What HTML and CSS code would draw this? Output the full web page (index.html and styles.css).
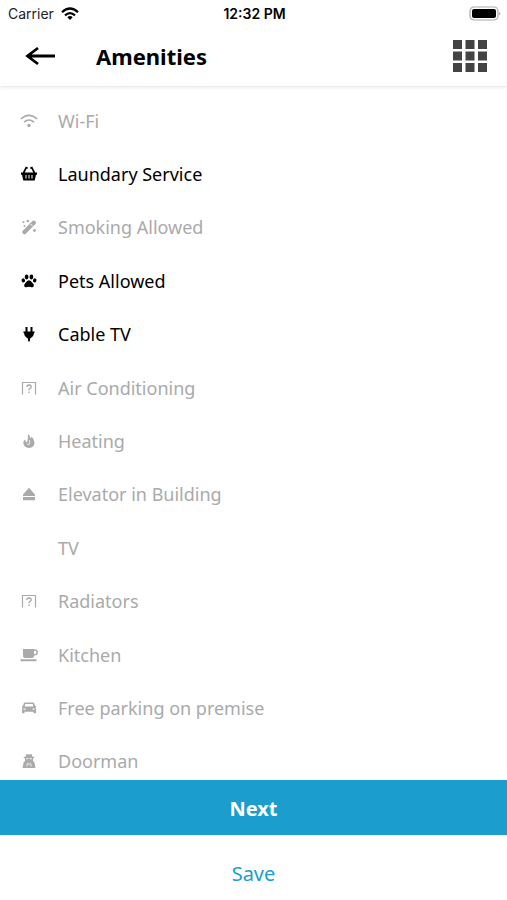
FILE: index.html
```html
<!DOCTYPE html>
<html lang="en">
<head>
    <meta charset="UTF-8">
    <meta name="viewport" content="width=device-width, initial-scale=1">
    <title>Amenities</title>
    <link rel="stylesheet" href="styles.css">
</head>
<body>
    <header class="header">
        <div class="status">
            <div class="carrier">
                <span>Carrier</span>
                <svg width="18" height="14" viewBox="0 0 18 14" fill="none" stroke="#000" stroke-width="2.2">
                    <path d="M1 5.2Q9-2.2 17 5.2M4 8.4Q9 3.8 14 8.4"/>
                    <path d="M9 13L6.3 10.2Q9 8 11.7 10.2Z" fill="#000" stroke="none"/>
                </svg>
            </div>
            <time class="clock">12:32 PM</time>
            <svg class="battery" width="32" height="16" viewBox="0 0 32 16">
                <rect x="1" y="1" width="28" height="13" rx="4" fill="#fff" stroke="#aaa" stroke-width="1.2"/>
                <rect x="3" y="3" width="24" height="9" rx="2" fill="#000"/>
                <path d="M30.3 5.5Q32 7.5 30.3 9.5Z" fill="#888"/>
            </svg>
        </div>
        <div class="navbar">
            <button class="icon-button" type="button" aria-label="Back">
                <svg width="30" height="20" viewBox="0 0 30 20" fill="none" stroke="#000" stroke-width="2.8">
                    <path d="M2 10H30M13 2L2.500 10L13 18"/>
                </svg>
            </button>
            <h1 class="title">Amenities</h1>
            <button class="icon-button" type="button" aria-label="Menu">
                <svg width="34" height="32" viewBox="0 0 34 32" fill="#434343">
                    <path d="M0 0h9v9H0zM12.500 0h9v9h-9zM25 0h9v9h-9zM0 11.500h9v9H0zM12.500 11.500h9v9h-9zM25 11.500h9v9h-9zM0 23h9v9H0zM12.500 23h9v9h-9zM25 23h9v9h-9z"/>
                </svg>
            </button>
        </div>
    </header>

    <main class="amenities">
        <button class="amenity" type="button" aria-pressed="false">
            <svg class="icon" viewBox="0 0 18 18" fill="none" stroke="currentColor" stroke-width="1.6">
                <path class="line" d="M.8 7Q9-.2 17.200 7M4 10.200Q9 5.800 14 10.200"/>
                <circle cx="9" cy="13.500" r="1.700" fill="currentColor" stroke="none"/>
            </svg>
            <span>Wi-Fi</span>
        </button>
        <button class="amenity" type="button" aria-pressed="true">
            <svg class="icon" viewBox="0 0 18 18">
                <path d="M1 7.500H17V9.700H16L14.700 15.500H3.300L2 9.700H1Z"/>
                <path d="M3.500 8L6.200 2.700L7.700 3.300M14.500 8L11.800 2.700L10.300 3.300" fill="none" stroke="currentColor" stroke-width="1.700"/>
                <path d="M6 10v3.500M9 10v3.500M12 10v3.500" stroke="#fff"/>
            </svg>
            <span>Laundary Service</span>
        </button>
        <button class="amenity" type="button" aria-pressed="false">
            <svg class="icon" viewBox="0 0 18 18">
                <path d="M2.500 13L12.500 3Q13.800 2 15 3L15.700 3.700Q16.500 4.800 15.500 6L5.500 16Q4.300 16.700 3.300 16L2.600 15.300Q1.800 14 2.500 13Z"/>
                <path d="M10.500 6L12.500 8" stroke="#fff"/>
                <circle cx="3.500" cy="4" r="1.100"/>
                <circle cx="7.800" cy="3" r="1.300"/>
                <circle cx="4.500" cy="8" r="1"/>
                <circle cx="14.500" cy="12.500" r="1.400"/>
            </svg>
            <span>Smoking Allowed</span>
        </button>
        <button class="amenity" type="button" aria-pressed="true">
            <svg class="icon" viewBox="0 0 18 18">
                <ellipse cx="6.600" cy="5" rx="1.900" ry="2.400"/>
                <ellipse cx="11.400" cy="5" rx="1.900" ry="2.400"/>
                <ellipse cx="3.300" cy="8.400" rx="1.700" ry="2.100" transform="rotate(-20 3.300 8.400)"/>
                <ellipse cx="14.700" cy="8.400" rx="1.700" ry="2.100" transform="rotate(20 14.700 8.400)"/>
                <path d="M9 8.300Q11 8.300 12.300 10.800Q14.200 12.300 13.800 14Q13 15.800 10.800 14.900Q9 14.500 7.200 14.900Q5 15.800 4.200 14Q3.800 12.300 5.700 10.800Q7 8.300 9 8.300Z"/>
            </svg>
            <span>Pets Allowed</span>
        </button>
        <button class="amenity" type="button" aria-pressed="true">
            <svg class="icon" viewBox="0 0 18 18">
                <path d="M5.500 2h2v4.500h3V2h2v4.500H14.500V8H13.900Q13.900 11.500 10.300 13.300L9.700 16.500h-1.400L7.700 13.300Q4.100 11.500 4.100 8H3.500V6.500H5.500Z"/>
            </svg>
            <span>Cable TV</span>
        </button>
        <button class="amenity" type="button" aria-pressed="false">
            <svg class="icon" viewBox="0 0 18 18">
                <path d="M2.500 15.500V3.500H15.500V15.500" fill="none" stroke="currentColor" stroke-width="1.200"/>
                <path d="M6.800 7.800Q7 6 9.200 6Q11.300 6.100 11.200 7.800Q11 8.800 10 9.500Q9 10.300 9 11.300M9 12.500v1.500" fill="none" stroke="currentColor" stroke-width="1.400"/>
            </svg>
            <span>Air Conditioning</span>
        </button>
        <button class="amenity" type="button" aria-pressed="false">
            <svg class="icon" viewBox="0 0 18 18">
                <path d="M8 2Q10.500 3.500 10.300 6.500Q11.600 6 11.500 4.500Q14.500 7.300 14.500 10.500Q14.300 15.700 9 16Q3.700 15.700 3.300 10.800Q3.300 8.500 5.300 7.500Q5 10 7 10.300Q8 8.300 8 2Z"/>
                <path d="M9.500 8Q10.500 10 9 12.500Q7.500 13 7 11.500" fill="none" stroke="#fff" stroke-width=".8"/>
            </svg>
            <span>Heating</span>
        </button>
        <button class="amenity" type="button" aria-pressed="false">
            <svg class="icon" viewBox="0 0 18 18">
                <path d="M9 2.800L15 9.500V11H3V9.500ZM3 12H15V15.200H3Z"/>
            </svg>
            <span>Elevator in Building</span>
        </button>
        <button class="amenity" type="button" aria-pressed="false">
            <svg class="icon" viewBox="0 0 18 18"></svg>
            <span>TV</span>
        </button>
        <button class="amenity" type="button" aria-pressed="false">
            <svg class="icon" viewBox="0 0 18 18">
                <path d="M2.500 15.500V3.500H15.500V15.500" fill="none" stroke="currentColor" stroke-width="1.200"/>
                <path d="M6.800 7.800Q7 6 9.200 6Q11.300 6.100 11.200 7.800Q11 8.800 10 9.500Q9 10.300 9 11.300M9 12.500v1.500" fill="none" stroke="currentColor" stroke-width="1.400"/>
            </svg>
            <span>Radiators</span>
        </button>
        <button class="amenity" type="button" aria-pressed="false">
            <svg class="icon" viewBox="0 0 18 18">
                <path d="M3 3H14V10Q14 12 12 12H5Q3 12 3 10ZM.5 13.200H16.500V15.200H.5Z"/>
                <path d="M14 4H15Q17.200 4.200 17.200 6.300Q17 8.800 14 9" fill="none" stroke="currentColor" stroke-width="1.500"/>
            </svg>
            <span>Kitchen</span>
        </button>
        <button class="amenity" type="button" aria-pressed="false">
            <svg class="icon" viewBox="0 0 18 18">
                <path fill-rule="evenodd" d="M5 3.500H13Q14 3.500 14.300 4.500L15 7H16V8.300H15.300Q16 9 16 10.500V14.300H13.500V12.700H4.500V14.300H2V10.500Q2 9 2.700 8.300H2V7H3L3.700 4.500Q4 3.500 5 3.500ZM5.300 4.900L4.600 7.600H13.400L12.700 4.900ZM3.500 9.500V10.800H5.500V9.500ZM12.500 9.500V10.800H14.500V9.500Z"/>
            </svg>
            <span>Free parking on premise</span>
        </button>
        <button class="amenity" type="button" aria-pressed="false">
            <svg class="icon" viewBox="0 0 18 18">
                <path d="M6.500 2L9 2.500L11.500 2L12.500 4.700H14.200V6.200H13V9L14.300 10L15.500 16H2.500L3.700 10L5 9V6.200H3.800V4.700H5.500Z"/>
                <path d="M6 6.700h2.500M9.500 6.700H12M7 10.800L9 12.500L11 10.800M7 12v2.500M11 12v2.500" fill="none" stroke="#fff" stroke-width=".8"/>
            </svg>
            <span>Doorman</span>
        </button>
    </main>

    <footer class="actions">
        <button class="next" type="button">Next</button>
        <button class="save" type="button">Save</button>
    </footer>
</body>
</html>
```
FILE: styles.css
```css
* {
    box-sizing: border-box;
}

body {
    margin: 0;
    height: 100vh;
    display: flex;
    flex-direction: column;
    overflow: hidden;
    font-family: "Noto Sans", "Open Sans", sans-serif;
    background-color: #fff;
    color: #000;
}

button {
    margin: 0;
    padding: 0;
    border: none;
    background: none;
    font: inherit;
    cursor: pointer;
}

svg {
    display: block;
}

.header {
    flex: none;
    box-shadow: 0 1px 3px rgba(0, 0, 0, 0.12);
}

.status {
    display: grid;
    grid-template-columns: 1fr auto 1fr;
    align-items: center;
    height: 27px;
    padding: 0 6px 0 8px;
    font-family: Inter, sans-serif;
    font-size: 14px;
}

.carrier {
    display: flex;
    align-items: center;
    gap: 7px;
    color: #222;
}

.clock {
    font-weight: 600;
}

.battery {
    justify-self: end;
}

.navbar {
    display: flex;
    align-items: center;
    height: 59px;
    padding: 0 20px 2px 25px;
}

.icon-button {
    flex: none;
}

.title {
    flex: 1;
    margin: 0 0 0 41px;
    font-size: 22px;
    font-weight: 700;
    line-height: 30px;
}

/* the last row runs under the buttons */
.amenities {
    flex: 1;
    display: flex;
    flex-direction: column;
    margin-bottom: -8px;
    padding-top: 8px;
}

.amenity {
    flex: 1 0 48px;
    display: flex;
    align-items: center;
    gap: 20px;
    padding: 0 20px;
    font-size: 18px;
    text-align: left;
    color: #aaa;
}

.amenity[aria-pressed="true"] {
    color: #000;
}

.icon {
    width: 18px;
    height: 18px;
    flex: none;
    fill: currentColor;
}

.icon .line {
    fill: none;
}

.actions {
    position: relative;
    flex: none;
    display: flex;
    flex-direction: column;
    background-color: #fff;
}

.next {
    height: 55px;
    padding-top: 1px;
    background-color: #1b9dce;
    color: #fff;
    font-size: 20px;
    font-weight: 700;
}

.save {
    height: 65px;
    padding-bottom: 4px;
    padding-top: 16px;
    color: #1b9dce;
    font-size: 20px;
}
```
